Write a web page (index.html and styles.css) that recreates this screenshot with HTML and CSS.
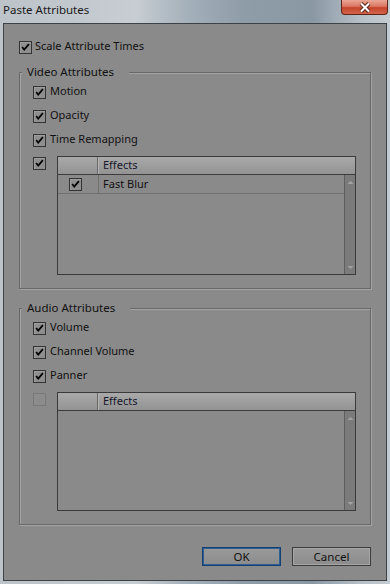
FILE: index.html
```html
<!DOCTYPE html>
<html lang="en">
<head>
  <meta charset="UTF-8" />
  <title>Paste Attributes</title>
  <link rel="stylesheet" href="styles.css">
</head>
<body>
  <div class="window">
    <div class="titlebar">
      <div class="title">Paste Attributes</div>
      <div class="close">
        <svg width="14" height="11" viewBox="0 0 14 11">
          <path class="x-shadow" d="M3 1.5 L11 9.5 M11 1.5 L3 9.5"/>
          <path class="x-mark" d="M3 1.5 L11 9.5 M11 1.5 L3 9.5"/>
        </svg>
      </div>
    </div>

    <div class="client">
      <div class="item">
        <span class="box"><svg viewBox="0 0 13 13"><path d="M2.5 6 L5 9 L10.5 2.5"/></svg></span>
        <span class="label">Scale Attribute Times</span>
      </div>

      <div class="group">
        <div class="legend">Video Attributes</div>
        <div class="item first">
          <span class="box"><svg viewBox="0 0 13 13"><path d="M2.5 6 L5 9 L10.5 2.5"/></svg></span>
          <span class="label">Motion</span>
        </div>
        <div class="item">
          <span class="box"><svg viewBox="0 0 13 13"><path d="M2.5 6 L5 9 L10.5 2.5"/></svg></span>
          <span class="label">Opacity</span>
        </div>
        <div class="item">
          <span class="box"><svg viewBox="0 0 13 13"><path d="M2.5 6 L5 9 L10.5 2.5"/></svg></span>
          <span class="label">Time Remapping</span>
        </div>
        <div class="fx-row">
          <span class="box"><svg viewBox="0 0 13 13"><path d="M2.5 6 L5 9 L10.5 2.5"/></svg></span>
          <div class="table">
            <div class="thead">
              <div class="th-check"></div>
              <div class="th-name">Effects</div>
            </div>
            <div class="tbody">
              <div class="rows">
                <div class="row">
                  <div class="cell-check">
                    <span class="box"><svg viewBox="0 0 13 13"><path d="M2.5 6 L5 9 L10.5 2.5"/></svg></span>
                  </div>
                  <div class="cell-name">Fast Blur</div>
                </div>
              </div>
              <div class="scroll">
                <svg width="7" height="5" viewBox="0 0 7 5"><path d="M0.5 4 L3.5 1 L6.5 4 Z"/></svg>
                <svg width="7" height="5" viewBox="0 0 7 5"><path d="M0.5 1 L3.5 4 L6.5 1 Z"/></svg>
              </div>
            </div>
          </div>
        </div>
      </div>

      <div class="group">
        <div class="legend">Audio Attributes</div>
        <div class="item first">
          <span class="box"><svg viewBox="0 0 13 13"><path d="M2.5 6 L5 9 L10.5 2.5"/></svg></span>
          <span class="label">Volume</span>
        </div>
        <div class="item">
          <span class="box"><svg viewBox="0 0 13 13"><path d="M2.5 6 L5 9 L10.5 2.5"/></svg></span>
          <span class="label">Channel Volume</span>
        </div>
        <div class="item">
          <span class="box"><svg viewBox="0 0 13 13"><path d="M2.5 6 L5 9 L10.5 2.5"/></svg></span>
          <span class="label">Panner</span>
        </div>
        <div class="fx-row">
          <span class="box off"></span>
          <div class="table">
            <div class="thead">
              <div class="th-check"></div>
              <div class="th-name">Effects</div>
            </div>
            <div class="tbody">
              <div class="rows"></div>
              <div class="scroll">
                <svg width="7" height="5" viewBox="0 0 7 5"><path d="M0.5 4 L3.5 1 L6.5 4 Z"/></svg>
                <svg width="7" height="5" viewBox="0 0 7 5"><path d="M0.5 1 L3.5 4 L6.5 1 Z"/></svg>
              </div>
            </div>
          </div>
        </div>
      </div>

      <div class="actions">
        <button class="btn default">OK</button>
        <button class="btn">Cancel</button>
      </div>
    </div>
  </div>
</body>
</html>
```

FILE: styles.css
```css
body {
  margin: 0;
  width: 390px;
  height: 584px;
  overflow: hidden;
  font-family: "Noto Sans", sans-serif;
  font-size: 11px;
  color: #111;
}
.window {
  display: flex;
  flex-direction: column;
  height: 584px;
  background: linear-gradient(90deg, #bcc3c9 0%, #c7cdd2 35%, #a4b0ba 48%, #8f9da9 62%, #8a98a4 80%, #b4bec6 92%, #c5ccd1 100%);
}
.titlebar {
  height: 23px;
  display: flex;
  justify-content: space-between;
  align-items: flex-start;
}
.title {
  padding: 2px 0 0 3px;
  line-height: 16px;
  font-size: 11.5px;
  color: #1a1a1a;
}
.close {
  width: 47px;
  height: 15px;
  margin-right: 2px;
  box-sizing: border-box;
  border: 1px solid #5e2418;
  border-top: none;
  border-radius: 0 0 4px 4px;
  background: linear-gradient(#e9a796 0%, #dc7763 45%, #c4452c 55%, #d3654c 100%);
  display: flex;
  justify-content: center;
  align-items: center;
}
.x-shadow {
  stroke: #5a2a20;
  stroke-width: 4;
}
.x-mark {
  stroke: #fff;
  stroke-width: 2;
}
.client {
  flex: 1;
  margin: 0 3px 3px;
  border: 1px solid #3b4248;
  background: #8a8a8a;
  padding: 17px 15px 0;
  display: flex;
  flex-direction: column;
}
.item {
  display: flex;
  align-items: flex-start;
  height: 13px;
  gap: 3px;
}
.label {
  line-height: 14px;
  margin-top: -2px;
}
.group .item {
  gap: 4px;
  margin-top: 11px;
}
.group .item.first {
  margin-top: 7px;
}
.box {
  width: 13px;
  height: 13px;
  box-sizing: border-box;
  border: 1px solid #333;
  background: #8e8e8e;
  box-shadow: inset 1px 1px 0 #9e9e9e;
  flex: none;
  display: block;
}
.box svg {
  display: block;
  width: 11px;
  height: 11px;
}
.box path {
  fill: none;
  stroke: #000;
  stroke-width: 2;
}
.box.off {
  border-color: #787878;
  box-shadow: none;
  background: #8c8c8c;
}
.group {
  margin-top: 18px;
  border: 1px solid #686868;
  box-shadow: inset 1px 1px 0 #a3a3a3, 1px 1px 0 #a3a3a3;
  padding: 0 14px 13px 13px;
  display: flex;
  flex-direction: column;
}
.group + .group {
  margin-top: 19px;
}
.legend {
  align-self: flex-start;
  margin: -8px 0 0 -11px;
  padding: 0 15px 0 5px;
  line-height: 14px;
  font-size: 11.5px;
  background: #8a8a8a;
}
.fx-row {
  display: flex;
  align-items: flex-start;
  gap: 11px;
  margin-top: 9px;
}
.fx-row > .box {
  margin-top: 1px;
}
.table {
  flex: 1;
  height: 119px;
  box-sizing: border-box;
  border: 1px solid #3a3a3a;
  display: flex;
  flex-direction: column;
}
.thead {
  height: 18px;
  box-sizing: border-box;
  display: flex;
  background: linear-gradient(#a9a9a9, #939393);
  border-bottom: 1px solid #3c3c3c;
  line-height: 16px;
  color: #16162a;
}
.th-check {
  width: 39px;
  border-right: 1px solid #6a6a6a;
  box-shadow: 1px 0 0 #b3b3b3;
}
.th-name {
  padding-left: 5px;
}
.tbody {
  flex: 1;
  display: flex;
}
.rows {
  flex: 1;
}
.row {
  height: 19px;
  box-sizing: border-box;
  border-bottom: 1px solid #707070;
  display: flex;
}
.cell-check {
  width: 41px;
  box-sizing: border-box;
  border-right: 1px solid #707070;
  padding-left: 11px;
  display: flex;
  align-items: center;
}
.cell-name {
  padding-left: 4px;
  line-height: 17px;
}
.scroll {
  width: 11px;
  box-sizing: border-box;
  background: #7b7b7b;
  border-left: 1px solid #5e5e5e;
  display: flex;
  flex-direction: column;
  justify-content: space-between;
  align-items: center;
  padding: 5px 0 4px;
}
.scroll path {
  fill: #a2a2a2;
}
.actions {
  display: flex;
  justify-content: flex-end;
  gap: 11px;
  margin-top: 22px;
}
.btn {
  width: 79px;
  height: 19px;
  padding: 0;
  border: 1px solid #3c3c3c;
  background: linear-gradient(#9a9a9a, #8c8c8c);
  box-shadow: inset 0 0 0 1px #a6a6a6;
  font: inherit;
  font-size: 11.5px;
  color: #111;
}
.btn.default {
  border-color: #143f73;
  box-shadow: inset 0 0 0 1px #2f5f93;
}
```
